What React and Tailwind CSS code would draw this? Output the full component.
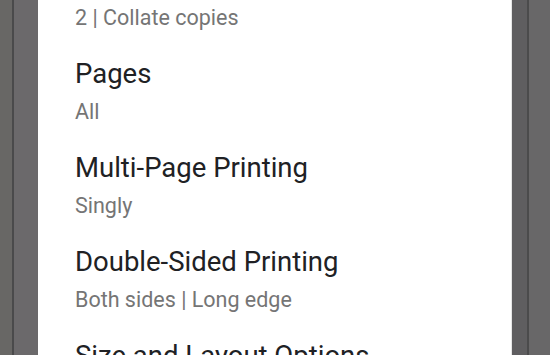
import React from "react";

const items = [
  { title: "Copies", sub: "2 | Collate copies" },
  { title: "Pages", sub: "All" },
  { title: "Multi-Page Printing", sub: "Singly" },
  { title: "Double-Sided Printing", sub: "Both sides | Long edge" },
  { title: "Size and Layout Options", sub: "A4" },
];

export default function App() {
  return (
    <div className="flex w-[550px] h-[355px] overflow-hidden bg-white" style={{ fontFamily: "Roboto, 'Noto Sans', sans-serif" }}>
      <div className="flex w-[38px] shrink-0">
        <div className="w-[12px] bg-[#686765]" />
        <div className="w-[2px] bg-[#4a4a4b]" />
        <div className="flex-1 bg-[#6b696b]" />
      </div>
      <div className="flex-1 overflow-hidden bg-white border-r border-[#e6e6e6]">
        <div className="-mt-[50px] pl-[37px]">
          {items.map((it) => (
            <div key={it.title} className="pt-[13px] pb-[13px]">
              <div className="text-[27.5px] leading-[34px] text-[#202124]">{it.title}</div>
              <div className="mt-[8px] text-[21.5px] leading-[26px] text-[#757575]">{it.sub}</div>
            </div>
          ))}
        </div>
      </div>
      <div className="flex w-[38px] shrink-0">
        <div className="w-[15px] bg-[#5f5e60]" />
        <div className="w-[2px] bg-[#4b4b4c]" />
        <div className="flex-1 bg-[#686768]" />
      </div>
    </div>
  );
}
